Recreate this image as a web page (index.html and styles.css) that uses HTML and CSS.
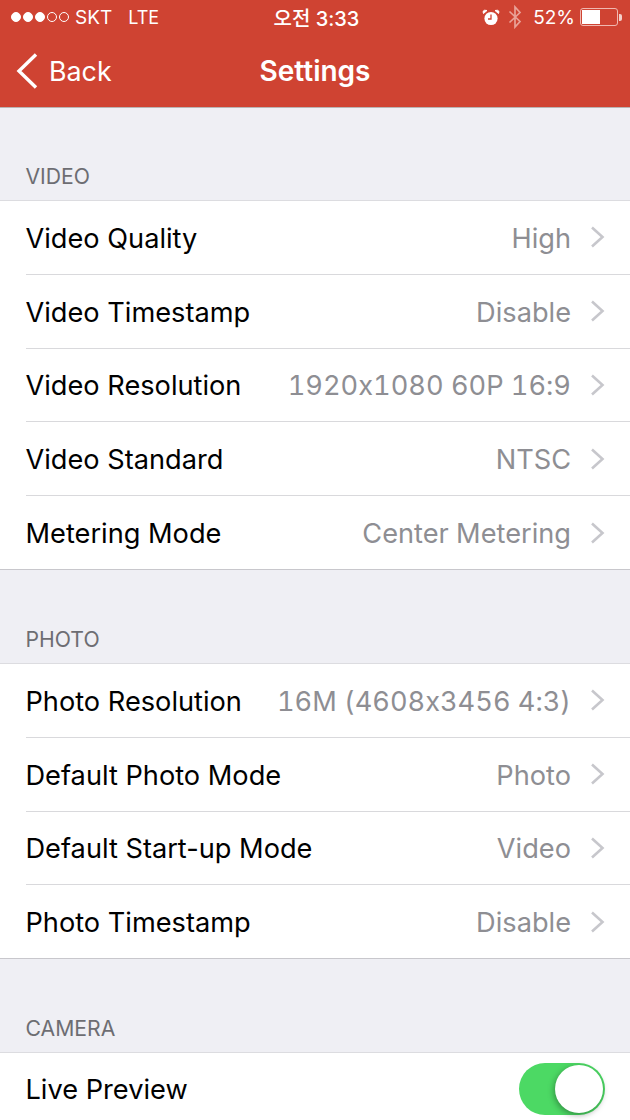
FILE: index.html
```html
<!DOCTYPE html>
<html lang="en">
<head>
<meta charset="utf-8">
<title>Settings</title>
<link rel="stylesheet" href="styles.css">
</head>
<body>
<div class="phone">
  <header class="top">
    <div class="status">
      <div class="status-left">
        <span class="signal"><i class="dot on"></i><i class="dot on"></i><i class="dot on"></i><i class="dot"></i><i class="dot"></i></span>
        <span class="carrier">SKT</span>
        <span class="net">LTE</span>
      </div>
      <div class="clock">오전 3:33</div>
      <div class="status-right">
        <svg class="alarm" width="18" height="17" viewBox="0 0 18 17"><circle cx="9" cy="9.5" r="6.6" fill="#fff"/><path d="M1.5 4.5 L5 1.5 Q2 0.5 1 2.5 Z M16.5 4.5 L13 1.5 Q16 0.5 17 2.5 Z" fill="#fff" stroke="#fff"/><path d="M9 5.5 V10 H6" fill="none" stroke="#cf4332" stroke-width="1.3"/></svg>
        <svg class="bt" width="14" height="24" viewBox="0 0 14 24"><path d="M1.5 6.5 L12 16.5 L7 22 V2 L12 7.5 L1.5 17.5" fill="none" stroke="#e9a298" stroke-width="1.7"/></svg>
        <span class="pct">52%</span>
        <span class="battery"><span class="level"></span></span><span class="tip"></span>
      </div>
    </div>
    <div class="nav">
      <div class="back">
        <svg width="24" height="38" viewBox="0 0 24 38"><path d="M21 2.5 L4 19 L21 35.5" fill="none" stroke="#fff" stroke-width="3.4"/></svg>
        <span>Back</span>
      </div>
      <div class="title">Settings</div>
    </div>
  </header>

  <section class="group">
    <h2 class="group-head">VIDEO</h2>
    <ul class="rows">
      <li class="row"><span class="label">Video Quality</span><span class="value">High</span><svg class="chev" width="16" height="24" viewBox="0 0 16 24"><path d="M2 2.5 L12.5 12 L2 21.5" fill="none" stroke="#c7c7cc" stroke-width="2.6"/></svg></li>
      <li class="row"><span class="label">Video Timestamp</span><span class="value">Disable</span><svg class="chev" width="16" height="24" viewBox="0 0 16 24"><path d="M2 2.5 L12.5 12 L2 21.5" fill="none" stroke="#c7c7cc" stroke-width="2.6"/></svg></li>
      <li class="row"><span class="label">Video Resolution</span><span class="value">1920x1080 60P 16:9</span><svg class="chev" width="16" height="24" viewBox="0 0 16 24"><path d="M2 2.5 L12.5 12 L2 21.5" fill="none" stroke="#c7c7cc" stroke-width="2.6"/></svg></li>
      <li class="row"><span class="label">Video Standard</span><span class="value">NTSC</span><svg class="chev" width="16" height="24" viewBox="0 0 16 24"><path d="M2 2.5 L12.5 12 L2 21.5" fill="none" stroke="#c7c7cc" stroke-width="2.6"/></svg></li>
      <li class="row"><span class="label">Metering Mode</span><span class="value">Center Metering</span><svg class="chev" width="16" height="24" viewBox="0 0 16 24"><path d="M2 2.5 L12.5 12 L2 21.5" fill="none" stroke="#c7c7cc" stroke-width="2.6"/></svg></li>
    </ul>
  </section>

  <section class="group">
    <h2 class="group-head">PHOTO</h2>
    <ul class="rows">
      <li class="row"><span class="label">Photo Resolution</span><span class="value">16M (4608x3456 4:3)</span><svg class="chev" width="16" height="24" viewBox="0 0 16 24"><path d="M2 2.5 L12.5 12 L2 21.5" fill="none" stroke="#c7c7cc" stroke-width="2.6"/></svg></li>
      <li class="row"><span class="label">Default Photo Mode</span><span class="value">Photo</span><svg class="chev" width="16" height="24" viewBox="0 0 16 24"><path d="M2 2.5 L12.5 12 L2 21.5" fill="none" stroke="#c7c7cc" stroke-width="2.6"/></svg></li>
      <li class="row"><span class="label">Default Start-up Mode</span><span class="value">Video</span><svg class="chev" width="16" height="24" viewBox="0 0 16 24"><path d="M2 2.5 L12.5 12 L2 21.5" fill="none" stroke="#c7c7cc" stroke-width="2.6"/></svg></li>
      <li class="row"><span class="label">Photo Timestamp</span><span class="value">Disable</span><svg class="chev" width="16" height="24" viewBox="0 0 16 24"><path d="M2 2.5 L12.5 12 L2 21.5" fill="none" stroke="#c7c7cc" stroke-width="2.6"/></svg></li>
    </ul>
  </section>

  <section class="group">
    <h2 class="group-head">CAMERA</h2>
    <ul class="rows">
      <li class="row row-toggle"><span class="label">Live Preview</span><span class="switch"><span class="knob"></span></span></li>
    </ul>
  </section>
</div>
</body>
</html>
```

FILE: styles.css
```css
* { box-sizing: border-box; }
html, body { margin: 0; padding: 0; }
body { background: #efeff4; font-family: Inter, "Noto Sans CJK KR", sans-serif; font-feature-settings: "calt" 0; overflow: hidden; }
.phone { width: 630px; height: 1120px; overflow: hidden; background: #efeff4; }

.top { height: 108px; background: #cf4332; color: #fff; border-bottom: 1px solid #b9b4b4; }
.status { height: 34px; padding: 0 8px 0 11px; display: flex; align-items: center; justify-content: space-between; position: relative; font-size: 19px; }
.status-left { display: flex; align-items: center; }
.signal { display: flex; gap: 2px; margin-right: 6px; }
.dot { width: 10px; height: 10px; border-radius: 50%; border: 1px solid #fff; display: block; }
.dot.on { background: #fff; }
.carrier { margin-right: 16px; }
.net { font-size: 18px; }
.clock { position: absolute; left: 3px; right: 0; text-align: center; font-weight: 500; font-size: 20px; }
.status-right { display: flex; align-items: center; position: relative; }
.alarm { margin-right: 8px; }
.bt { margin-right: 11px; }
.pct { margin-right: 5px; }
.battery { width: 38px; height: 18px; border: 1px solid #f0b8b0; border-radius: 3px; padding: 1px; display: block; }
.level { display: block; width: 52%; height: 100%; background: #fff; }
.tip { width: 3px; height: 7px; background: #f4d0ca; border-radius: 0 2px 2px 0; margin-left: 1px; }

.nav { height: 73px; position: relative; display: flex; align-items: center; padding-left: 15px; }
.back { display: flex; align-items: center; gap: 10px; font-size: 26.8px; }
.title { position: absolute; left: 0; right: 0; text-align: center; font-size: 28px; font-weight: 600; }

.group-head { margin: 0; height: 93px; padding: 0 25.5px 11.5px; display: flex; align-items: flex-end; font-size: 21.2px; font-weight: 400; color: #6d6d72; }
.group:first-of-type .group-head { height: 92px; }
.rows { list-style: none; margin: 0; padding: 0; background: #fff; border-top: 1px solid #dcdce0; border-bottom: 1px solid #c8c7cc; }
.row { height: 73.75px; margin-left: 25.5px; padding: 2px 24px 0 0; display: flex; align-items: center; border-bottom: 1px solid #d9d9dc; }
.row:last-child { border-bottom: 0; height: 73px; }
.row.row-toggle { padding-top: 0; }
.label { flex: 1; font-size: 27.2px; color: #000; }
.value { font-size: 27.2px; color: #8e8e93; margin-right: 18px; font-feature-settings: "calt" 0, "tnum" 1; }
.chev { margin: -2px 0 0 1px; }
.switch { width: 86px; height: 52px; border-radius: 26px; background: #4cd964; position: relative; margin: -2px 1px 0 0; }
.knob { position: absolute; right: 2px; top: 2px; width: 48px; height: 48px; border-radius: 50%; background: #fff; box-shadow: -1px 2px 6px rgba(0,0,0,.35); }
```
